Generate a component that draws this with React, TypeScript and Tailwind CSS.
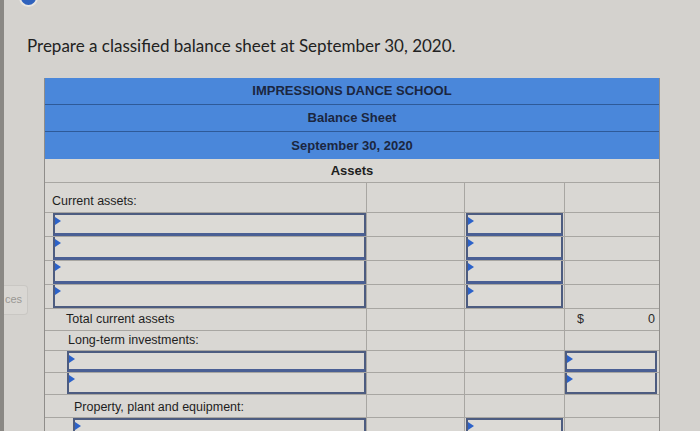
import React from "react";

const cols = "grid grid-cols-[322px_98px_100px_96px]";

const Marker = () => (
  <span className="absolute left-0 top-[2px] h-0 w-0 border-y-[4px] border-l-[6px] border-y-transparent border-l-[#2c62c9]" />
);

const InputCell = ({ first, last }: { first?: boolean; last?: boolean }) => (
  <div
    className={`relative h-full border-x-2 border-[#4d5c80] bg-[#dcdad6] ${first ? "border-t-2" : ""} ${
      last ? "border-b-2" : "border-b-[3px] border-b-[#4a5f94]"
    }`}
  >
    <Marker />
  </div>
);

const Cell = ({ children, className = "" }: { children?: React.ReactNode; className?: string }) => (
  <div className={`border-r border-[#a8a6a2] last:border-r-0 ${className}`}>{children}</div>
);

const LabelRow = ({ label, pl, h, align = "items-center" }: { label: string; pl: string; h: string; align?: string }) => (
  <div className={`${cols} ${h} border-b border-[#a8a6a2]`}>
    <Cell className={`flex ${align} ${pl} text-[12.5px] text-[#1e1e1e]`}>{label}</Cell>
    <Cell />
    <Cell />
    <Cell />
  </div>
);

export default function App() {
  return (
    <div className="flex h-[431px] w-[700px] overflow-hidden bg-[#d4d2ce] font-['Liberation_Sans',Arial,sans-serif]">
      <div className="w-[4px] shrink-0 bg-[#8a8884]" />
      <div className="flex flex-1 flex-col">
        <div className="-mt-[12px] ml-[15px] h-[19px] w-[19px] shrink-0 rounded-full border-2 border-[#e8e6e2] bg-[#2f62bd]" />
        <div className="mt-[27px] shrink-0 pl-[23px] font-['Lato','Open_Sans',sans-serif] text-[17px] leading-6 text-[#222]">
          Prepare a classified balance sheet at September 30, 2020.
        </div>
        <div className="mt-[20px] flex shrink-0">
          <div className="w-[40px] shrink-0 pt-[207px]">
            <div className="h-[30px] w-[24px] rounded-r border border-l-0 border-[#c9c7c3] bg-[#d9d7d3] pl-[1px] pt-[5px] text-[11px] text-[#9a9894]">
              ces
            </div>
          </div>
          <div className="w-[616px] border-l border-r border-[#8f8d8a]">
            <div className="bg-[#4a87da] text-[13px] font-bold text-[#1b2640]">
              <div className="flex h-[27px] items-center justify-center border-b border-[#2e5a98]">
                IMPRESSIONS DANCE SCHOOL
              </div>
              <div className="flex h-[27px] items-center justify-center border-b border-[#2e5a98]">Balance Sheet</div>
              <div className="flex h-[27px] items-center justify-center">September 30, 2020</div>
            </div>
            <div className="flex h-[24px] items-center justify-center border-b border-[#a8a6a2] bg-[#d9d7d3] text-[13px] font-bold text-[#1e1e1e]">
              Assets
            </div>
            <div className="bg-[#d9d7d3]">
              <LabelRow label="Current assets:" pl="pl-[7px] pb-[1px]" h="h-[30px]" align="items-end" />
              {[0, 1, 2, 3].map((i) => (
                <div key={i} className={`${cols} h-[24px] border-b border-[#a8a6a2]`}>
                  <Cell className="pl-[8px]">
                    <InputCell first={i === 0} last={i === 3} />
                  </Cell>
                  <Cell />
                  <Cell className="px-[1px]">
                    <InputCell first={i === 0} last={i === 3} />
                  </Cell>
                  <Cell />
                </div>
              ))}
              <div className={`${cols} h-[22px] border-b border-[#a8a6a2]`}>
                <Cell className="flex items-center pl-[21px] text-[12.5px] text-[#1e1e1e]">Total current assets</Cell>
                <Cell />
                <Cell />
                <Cell className="flex items-center justify-between pl-[12px] pr-[6px] text-[12.5px] text-[#2a2a2a]">
                  <span>$</span>
                  <span>0</span>
                </Cell>
              </div>
              <LabelRow label="Long-term investments:" pl="pl-[23px]" h="h-[20px]" />
              {[0, 1].map((i) => (
                <div key={i} className={`${cols} h-[22px] border-b border-[#a8a6a2]`}>
                  <Cell className="pl-[22px]">
                    <InputCell first={i === 0} last={i === 1} />
                  </Cell>
                  <Cell />
                  <Cell />
                  <Cell className="pr-[4px]">
                    <InputCell first={i === 0} last={i === 1} />
                  </Cell>
                </div>
              ))}
              <LabelRow label="Property, plant and equipment:" pl="pl-[29px] pt-[3px]" h="h-[23px]" />
              <div className={`${cols} h-[24px]`}>
                <Cell className="pl-[28px]">
                  <InputCell first />
                </Cell>
                <Cell />
                <Cell className="px-[1px]">
                  <InputCell first />
                </Cell>
                <Cell />
              </div>
            </div>
          </div>
        </div>
      </div>
    </div>
  );
}
